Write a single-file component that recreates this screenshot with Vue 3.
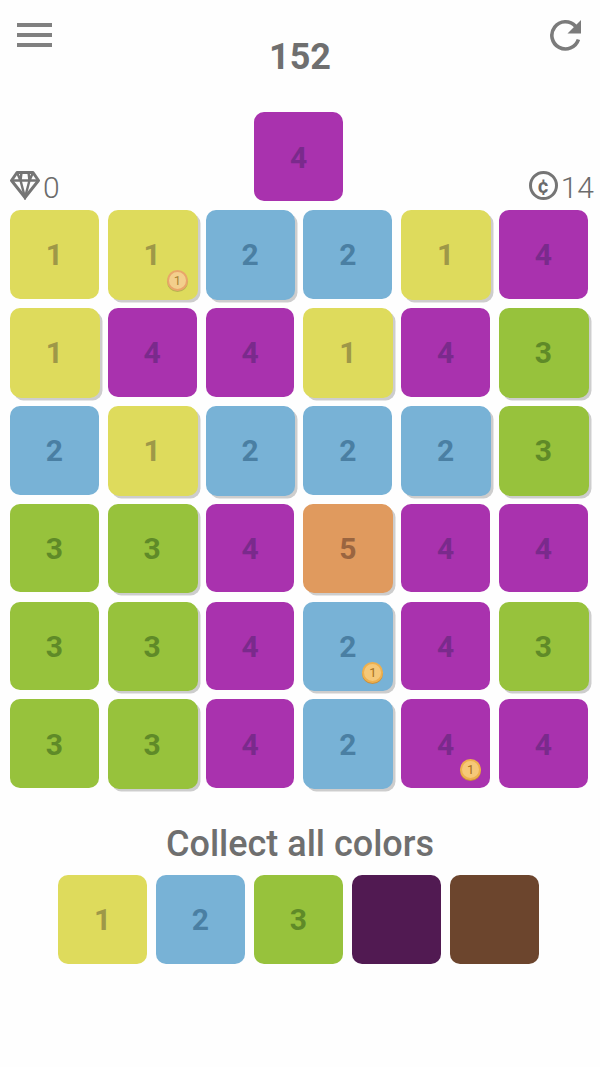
<script setup>
const S = true
const board = [
  [[1],[1,S,'pale'],[2,S],[2],[1,S],[4]],
  [[1,S],[4],[4],[1,S],[4],[3,S]],
  [[2],[1,S],[2,S],[2],[2,S],[3,S]],
  [[3],[3,S],[4],[5,S],[4],[4]],
  [[3],[3,S],[4],[2,S,'full'],[4],[3,S]],
  [[3],[3,S],[4],[2,S],[4,false,'full'],[4]],
]
const tiles = board.flat().map(([n, shadow, coin], id) => ({ id, n, shadow, coin }))
const goals = [
  { c: 'c1', n: 1 }, { c: 'c2', n: 2 }, { c: 'c3', n: 3 },
  { c: 'dark', n: '' }, { c: 'brown', n: '' },
]
</script>

<template>
  <main class="page">
    <header class="top">
      <button class="menu" aria-label="Menu"><i></i><i></i><i></i></button>
      <div class="score">152</div>
      <svg class="refresh" width="34" height="34" viewBox="0 0 34 34" aria-label="Restart">
        <path d="M26.5 8.2A13.6 13.6 0 1 0 29.4 21.5" fill="none" stroke="#7b7b7b" stroke-width="3.6"/>
        <path d="M32 2V15.5H18.5Z" fill="#7b7b7b"/>
      </svg>
    </header>

    <section class="status">
      <div class="stat">
        <svg class="gem" width="30" height="30" viewBox="0 0 30 30" aria-label="Gems">
          <path d="M7 2.5H23L28.5 10.5L15 27.5L1.5 10.5Z" fill="none" stroke="#757575" stroke-width="3" stroke-linejoin="round"/>
          <path d="M1.5 10.5H28.5M7 2.5L10.5 10.5L15 27.5L19.5 10.5L23 2.5M11.5 2.5L10.5 10.5M18.5 2.5L19.5 10.5" fill="none" stroke="#757575" stroke-width="2.4"/>
        </svg>
        <span>0</span>
      </div>
      <div class="tile c4 next"><span class="num">4</span></div>
      <div class="stat right">
        <div class="cent">¢</div>
        <span>14</span>
      </div>
    </section>

    <section class="board">
      <div v-for="t in tiles" :key="t.id" class="tile" :class="['c' + t.n, { shadow: t.shadow }]">
        <span class="num">{{ t.n }}</span>
        <span v-if="t.coin" class="coin" :class="t.coin">1</span>
      </div>
    </section>

    <h2 class="title">Collect all colors</h2>
    <section class="goals">
      <div v-for="g in goals" :key="g.c" class="tile" :class="g.c">
        <span class="num">{{ g.n }}</span>
      </div>
    </section>
  </main>
</template>

<style>
html, body { margin: 0; background: #fefefe; }
</style>

<style scoped>
.page {
  width: 600px;
  height: 1067px;
  overflow: hidden;
  background: #fefefe;
  font-family: Roboto, "Liberation Sans", sans-serif;
  color: #6f6f6f;
}
.top {
  height: 112px;
  display: grid;
  grid-template-columns: 1fr auto 1fr;
  align-items: start;
  padding: 0 17px;
  box-sizing: border-box;
}
.menu {
  justify-self: start;
  margin-top: 23px;
  padding: 0;
  border: 0;
  background: none;
  width: 35px;
  display: flex;
  flex-direction: column;
  gap: 6px;
}
.menu i { display: block; height: 4px; background: #808080; }
.score {
  font-size: 36px;
  font-weight: 700;
  line-height: 40px;
  margin-top: 37px;
}
.refresh { justify-self: end; margin-top: 18px; }

.status {
  height: 89px;
  display: grid;
  grid-template-columns: 244px 89px 1fr;
  padding: 0 6px 0 10px;
  margin-bottom: 9px;
}
.stat {
  display: flex;
  align-items: flex-end;
  gap: 3px;
  font-size: 30px;
  font-weight: 300;
  line-height: 30px;
  height: 30px;
  align-self: end;
  margin-bottom: 1px;
  color: #6b6b6b;
}
.stat span { margin-bottom: -3px; }
.stat.right { justify-content: flex-end; }
.cent {
  width: 29px;
  height: 29px;
  box-sizing: border-box;
  border: 3px solid #757575;
  border-radius: 50%;
  display: flex;
  align-items: center;
  justify-content: center;
  font-size: 20px;
  font-weight: 700;
  line-height: 1;
}

.board {
  display: grid;
  grid-template-columns: repeat(6, 88.8px);
  grid-auto-rows: 88.8px;
  gap: 9.1px 9px;
  padding-left: 10px;
}
.tile {
  position: relative;
  width: 88.8px;
  height: 88.8px;
  border-radius: 10px;
  display: flex;
  align-items: center;
  justify-content: center;
  background: var(--c);
}
.next { width: 89px; height: 89px; }
.num { font-size: 30px; font-weight: 700; line-height: 1; margin-top: 2px; }
.shadow { box-shadow: 1px 1px 0 var(--c), 3.5px 3.5px 0 #cdcdcd; }
.c1 { --c: #dedb5c; }
.c1 .num { color: #9e9848; }
.c2 { --c: #78b2d6; }
.c2 .num { color: #4a7fa3; }
.c3 { --c: #97c23c; }
.c3 .num { color: #5f8a28; }
.c4 { --c: #a932ae; }
.c4 .num { color: #7a2a8c; }
.c5 { --c: #e09a5e; }
.c5 .num { color: #9a6540; }
.dark { --c: #511a52; }
.brown { --c: #6c452d; }

.coin {
  position: absolute;
  left: 59px;
  top: 60px;
  width: 21px;
  height: 21px;
  box-sizing: border-box;
  border-radius: 50%;
  border: 2px solid #eeb04e;
  background: #f6c878;
  box-shadow: 0 1px 0 #c98f3a;
  color: #a8721e;
  font-size: 13px;
  line-height: 17px;
  text-align: center;
}
.coin.pale { background: #f3cf8c; border-color: #e9a66a; color: #a88436; box-shadow: 0 1px 0 #b9b250; }

.title {
  margin: 0;
  margin-top: 35px;
  height: 42px;
  font-size: 36px;
  line-height: 42px;
  font-weight: 500;
  text-align: center;
  color: #6f6f6f;
}
.goals {
  margin-top: 9.5px;
  display: flex;
  gap: 9.1px;
  padding-left: 58.2px;
}
</style>
